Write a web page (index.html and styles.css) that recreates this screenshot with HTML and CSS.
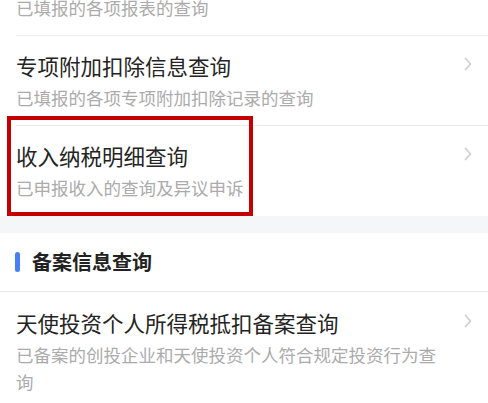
FILE: index.html
```html
<!DOCTYPE html>
<html lang="zh-CN">
<head>
<meta charset="utf-8">
<title>查询</title>
<link rel="stylesheet" href="styles.css">
</head>
<body>
<div class="page">
  <div class="list list-top">
    <div class="item">
      <div class="content">
        <div class="title">申报信息查询</div>
        <div class="sub">已填报的各项报表的查询</div>
      </div>
      <svg class="chev" viewBox="0 0 8 14" width="8" height="14"><path d="M1.5 1.5 L6.5 7 L1.5 12.5" fill="none" stroke="#cfcfcf" stroke-width="1.8" stroke-linecap="round" stroke-linejoin="round"/></svg>
    </div>
    <div class="item">
      <div class="content">
        <div class="title">专项附加扣除信息查询</div>
        <div class="sub">已填报的各项专项附加扣除记录的查询</div>
      </div>
      <svg class="chev" viewBox="0 0 8 14" width="8" height="14"><path d="M1.5 1.5 L6.5 7 L1.5 12.5" fill="none" stroke="#cfcfcf" stroke-width="1.8" stroke-linecap="round" stroke-linejoin="round"/></svg>
    </div>
    <div class="item item-marked">
      <div class="content">
        <div class="title">收入纳税明细查询</div>
        <div class="sub">已申报收入的查询及异议申诉</div>
      </div>
      <svg class="chev" viewBox="0 0 8 14" width="8" height="14"><path d="M1.5 1.5 L6.5 7 L1.5 12.5" fill="none" stroke="#cfcfcf" stroke-width="1.8" stroke-linecap="round" stroke-linejoin="round"/></svg>
      <div class="mark"></div>
    </div>
  </div>
  <div class="band"></div>
  <div class="section-head">
    <span class="bar"></span>
    <span class="section-title">备案信息查询</span>
  </div>
  <div class="list">
    <div class="item item-first">
      <div class="content">
        <div class="title">天使投资个人所得税抵扣备案查询</div>
        <div class="sub">已备案的创投企业和天使投资个人符合规定投资行为查询</div>
      </div>
      <svg class="chev" viewBox="0 0 8 14" width="8" height="14"><path d="M1.5 1.5 L6.5 7 L1.5 12.5" fill="none" stroke="#cfcfcf" stroke-width="1.8" stroke-linecap="round" stroke-linejoin="round"/></svg>
    </div>
  </div>
</div>
</body>
</html>
```

FILE: styles.css
```css
* {
  box-sizing: border-box;
}

html, body {
  margin: 0;
  padding: 0;
  background: #ffffff;
}

body {
  font-family: "Noto Sans CJK SC", "Noto Sans", sans-serif;
  overflow: hidden;
}

.page {
  width: 488px;
}

.list-top {
  margin-top: -55px;
}

.item {
  position: relative;
  display: flex;
  align-items: flex-start;
  gap: 16px;
  margin-left: 16px;
  padding: 16px 16px 14px 0;
  border-top: 1px solid #ececec;
}

.list-top .item:first-child {
  border-top: 1px solid transparent;
}

.item-first {
  border-top: none;
  padding-top: 17px;
}

.item-marked {
  padding-bottom: 15px;
}

.content {
  flex: 1;
  min-width: 0;
}

.title {
  font-size: 21.5px;
  line-height: 28px;
  color: #242424;
}

.sub {
  margin-top: 4px;
  font-size: 17.5px;
  line-height: 27px;
  color: #ababab;
}

.chev {
  flex: none;
  margin-top: 5px;
}

.mark {
  position: absolute;
  left: -9px;
  top: -10px;
  width: 246px;
  height: 100px;
  border: 4px solid #c40000;
  pointer-events: none;
}

.band {
  height: 17px;
  background: #f5f6f8;
}

.section-head {
  display: flex;
  align-items: center;
  height: 59px;
  padding-left: 15px;
  border-bottom: 1px solid #e8e8e8;
}

.bar {
  width: 5px;
  height: 20px;
  border-radius: 3px;
  background: #4a7ef5;
}

.section-title {
  margin-left: 12px;
  font-size: 20px;
  font-weight: 700;
  color: #222222;
  line-height: 28px;
}
```
